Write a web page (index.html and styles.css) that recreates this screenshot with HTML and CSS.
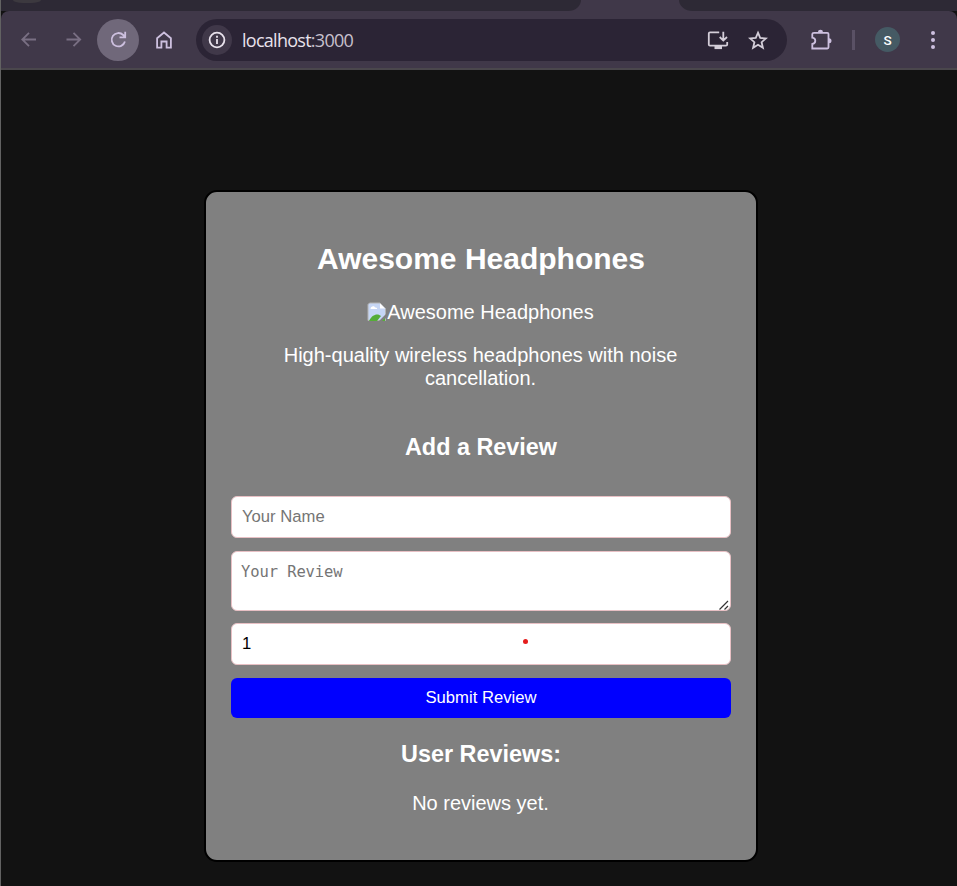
FILE: index.html
```html
<!DOCTYPE html>
<html lang="en">
<head>
<meta charset="utf-8">
<title>Awesome Headphones</title>
<link rel="stylesheet" href="styles.css">
</head>
<body>
<div class="window">
  <div class="tabstrip"><div class="tab-left"><span class="tab-button"></span></div><div class="tab-right"></div></div>
  <header class="toolbar">
    <svg class="icon back" viewBox="0 0 20 20"><path d="M17 9.500H3.500M10 2.800 3.300 9.500l6.700 6.700"/></svg>
    <svg class="icon forward" viewBox="0 0 20 20"><path d="M2.500 9.500H16M9.500 2.800l6.700 6.700-6.700 6.700"/></svg>
    <div class="reload"><svg class="icon" viewBox="0 0 20 20"><path d="M16.900 11.500A6.700 6.700 0 1 1 15.200 5L17 6.800M17.200 1.800V7.400H11.500"/></svg></div>
    <svg class="icon home" viewBox="0 0 20 20"><path d="M3.100 8.200 10 2.500l6.900 5.700V17.600H12.600V11.500H7.400V17.600H3.100Z"/></svg>
    <div class="address">
      <span class="info"><svg class="icon" viewBox="0 0 20 20"><circle cx="10" cy="10" r="7.400"/><path d="M10 9v5M10 5.800v1.900"/></svg></span>
      <span class="url">localhost<span class="port">:3000</span></span>
      <svg class="icon install" viewBox="0 0 22 20"><path d="M12.200 2.400H3Q1.800 2.400 1.800 3.600V14.400Q1.800 15.600 3 15.600H19Q20.200 15.600 20.200 14.400V12M16.300 1.700V10M12.700 7l3.600 3.600L20 7"/><path class="solid" d="M7.500 15.500h7.500v3.600H7.500z"/></svg>
      <svg class="icon star" viewBox="0 0 20 20"><path d="m10 2.700 2.200 5.200 5.700.5-4.300 3.800 1.300 5.600-4.900-3-4.900 3 1.300-5.600-4.300-3.800 5.700-.5Z"/></svg>
    </div>
    <svg class="icon puzzle" viewBox="0 0 24 24"><path d="M5 4.800H18.300Q19.500 4.800 19.500 6V19.300Q19.500 20.500 18.300 20.500H3.300V16C5.200 15.800 6.300 14.500 6.300 12.800S5.200 9.900 3.300 9.700V6Q3.300 4.800 5 4.800Z"/><path class="solid" d="M9 4.300a2.500 2.500 0 0 1 5 0zM20 10.300a2.500 2.500 0 0 1 0 5z"/></svg>
    <span class="divider"></span>
    <span class="avatar">S</span>
    <span class="menu"><i></i><i></i><i></i></span>
  </header>
  <main>
    <section class="card">
      <h1>Awesome Headphones</h1>
      <div class="product-image"><svg class="broken" viewBox="0 0 20 20"><path fill="#c6d6f5" stroke="#b4b4b4" d="M2.500 1h10.500l5.500 5.500v12h-17.500v-16z"/><path fill="#fff" d="M3.500 7c0-3 4-3.500 4.500-1.500 2-.5 2.500 1.500 2 1.500zM13 1.500v5h5z"/><path fill="#55ad38" d="M2 19c3-7 9-8 12-5l-4 5z"/><path fill="#808080" d="M11 20 20 11v4l-5 5z"/><path fill="#55ad38" d="m15 19 3-3v3z"/></svg><span>Awesome Headphones</span></div>
      <p class="description">High-quality wireless headphones with noise cancellation.</p>
      <h2 class="add-title">Add a Review</h2>
      <form>
        <input type="text" placeholder="Your Name" aria-label="Your Name">
        <div class="area"><textarea placeholder="Your Review" aria-label="Your Review"></textarea><svg class="grip" viewBox="0 0 10 10"><path d="M.5 9.500 9 1M5.500 9.500l3.500-3.500"/></svg></div>
        <div class="rating"><input type="text" value="1" aria-label="Rating"><span class="dot"></span></div>
        <button type="button">Submit Review</button>
      </form>
      <h2 class="reviews-title">User Reviews:</h2>
      <p class="empty">No reviews yet.</p>
    </section>
  </main>
</div>
</body>
</html>
```
FILE: styles.css
```css
* { box-sizing: border-box; }
body { margin: 0; background: #121212; font-family: "Liberation Sans", Arial, sans-serif; color: #fff; }
.window { height: 886px; overflow: hidden; border-left: 1px solid #626262; }
.tabstrip { height: 11px; display: flex; justify-content: space-between; background: #403849; }
.tab-left { width: 580px; background: #2d2935; border-bottom-right-radius: 15px 13px; }
.tab-right { width: 278px; background: #2d2935; border-bottom-left-radius: 16px 13px; }
.tab-button { display: block; width: 28px; height: 3px; margin-left: 12px; background: #3c393f; border-radius: 0 0 10px 10px / 0 0 3px 3px; }
.toolbar { height: 59px; display: flex; align-items: center; background: #403849; border-bottom: 2px solid #4a474c; border-radius: 8px 8px 0 0; }
.icon { flex: none; width: 20px; height: 20px; fill: none; stroke: #cdc0df; stroke-width: 1.8; }
.icon .solid { fill: currentColor; stroke: none; }
.back, .forward { stroke: #796f83; }
.back { margin-left: 18px; }
.forward { margin-left: 25px; }
.reload { width: 42px; height: 42px; margin-left: 13px; border-radius: 50%; background: #70687a; display: flex; align-items: center; justify-content: center; }
.home { margin-left: 15px; }
.address { width: 591px; height: 42px; margin-left: 22px; border-radius: 21px; background: #2b2435; display: flex; align-items: center; }
.address .icon { stroke: #d4ced9; color: #d4ced9; }
.info { width: 30px; height: 30px; margin-left: 6px; border-radius: 50%; background: #403849; display: flex; align-items: center; justify-content: center; }
.address .info .icon { stroke: #e8e2ec; }
.url { width: 112px; margin-left: 10px; font: 18px/24px "Open Sans", "Noto Sans", sans-serif; letter-spacing: -.73px; color: #e8e2ec; white-space: nowrap; }
.port { color: #c7c0cd; }
.address .install { width: 22px; margin-left: 353px; }
.star { margin-left: 19px; }
.puzzle { width: 24px; height: 24px; margin-left: 22px; color: #cdc0df; }
.divider { width: 3px; height: 20px; margin-left: 19px; background: #5a5165; }
.avatar { width: 25px; height: 25px; margin-left: 20px; border-radius: 50%; background: #455a64; font: 500 13.500px/26px Roboto, sans-serif; text-align: center; }
.menu { width: 4px; margin-left: 31px; display: grid; gap: 3px; }
.menu i { width: 4px; height: 4px; border-radius: 50%; background: #cdc0df; }
main { padding: 120px 0 0 203px; }
.card { width: 554px; height: 672px; padding: 46px 25px 0; border: 2px solid #000; border-radius: 13px; background: #808080; text-align: center; }
h1, h2, p { margin: 0; }
h1 { font-size: 30px; line-height: 42px; }
.product-image { margin: 20px 1px 0 0; height: 24px; display: flex; justify-content: center; align-items: center; font-size: 20px; line-height: 24px; }
.broken { width: 20px; height: 20px; }
.description { margin: 20px 1px 0 0; font-size: 20px; line-height: 23px; }
h2 { font-size: 23.400px; line-height: 28px; }
.add-title { margin-top: 43px; }
form { margin-top: 35px; display: flex; flex-direction: column; }
input, textarea { display: block; width: 100%; margin: 0; padding: 0 10px; border: 1px solid #e8c0c4; border-radius: 6px; background: #fff; color: #000; outline: none; }
input { height: 42px; font: 16.670px "Liberation Sans", Arial, sans-serif; }
::placeholder { color: #757575; }
.area, .rating { position: relative; }
.area { margin: 13px 0 12px; }
textarea { height: 60px; padding: 10px 9px; font: 15.500px/20px "DejaVu Sans Mono", monospace; letter-spacing: -.1px; resize: none; }
.grip { position: absolute; right: 2px; bottom: 1px; width: 10px; height: 10px; fill: none; stroke: #333; stroke-width: 1.2; }
.dot { position: absolute; left: 292px; top: 16px; width: 5px; height: 5px; border-radius: 50%; background: #e51c1c; }
button { height: 40px; margin-top: 13px; border: 0; border-radius: 6px; background: #00f; color: #fff; font: 16.670px "Liberation Sans", Arial, sans-serif; }
.reviews-title { margin-top: 22px; }
.empty { margin: 24px 1px 0 0; font-size: 20px; line-height: 23px; }
```
